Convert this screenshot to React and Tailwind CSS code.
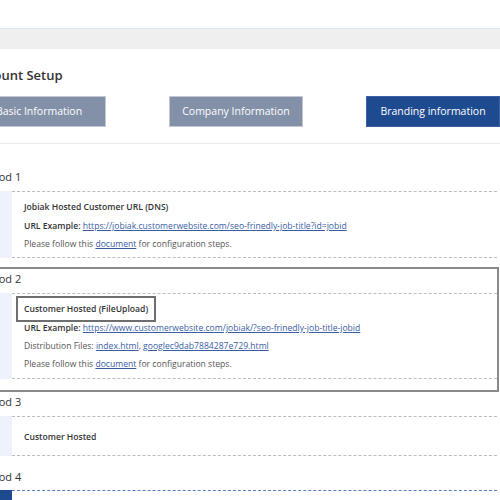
const Link = ({ children }) => (
  <span className="text-[#3a5da3] underline">{children}</span>
);

const Method = ({ label, selected, blue, className, labelGap, boxClass, children }) => (
  <section
    className={`ml-[-2px] w-[529px] border-2 pt-[3px] ${selected ? 'border-[#8a8a8a]' : 'border-transparent'} ${className}`}
  >
    <div className={`text-[11px] leading-[14px] text-[#333] ${labelGap}`}>{label}</div>
    <div className="flex">
      <div className={`w-[40px] shrink-0 ${blue ? 'bg-[#1e4a8f]' : 'bg-[#edf2fb]'}`} />
      <div
        className={`flex-1 border-y border-dashed pl-[4px] ${blue ? 'border-[#5d7fc0]' : 'border-[#bdbdbd]'} ${boxClass}`}
      >
        {children}
      </div>
    </div>
  </section>
);

const Title = ({ children, boxed }) => (
  <div
    className={`w-fit border-2 px-[6px] py-[5px] text-[8.6px] font-semibold leading-[12px] text-[#333] ${boxed ? 'border-[#6e6e6e]' : 'border-transparent'}`}
  >
    {children}
  </div>
);

const Line = ({ children, first }) => (
  <div className={`pl-[8px] text-[8.6px] leading-[12px] text-[#555] whitespace-nowrap ${first ? '' : 'mt-[6px]'}`}>
    {children}
  </div>
);

export default function App() {
  return (
    <div className="w-[500px] h-[500px] overflow-hidden bg-white font-['Open_Sans',sans-serif]">
      <div className="h-[28px]" />
      <div className="h-[21px] border-t border-[#dce5f2] bg-[#efefef]" />

      <div className="ml-[-28px] w-[530px]">
        <h1 className="mt-[17px] text-[13px] font-semibold leading-[18px] text-[#333]">Account Setup</h1>

        <div className="mt-[12px] flex gap-[63px]">
          <div className="flex h-[31px] w-[134px] items-center justify-center border border-[#c3c9d4] bg-[#8290a8] text-[10.5px] text-white">
            Basic Information
          </div>
          <div className="flex h-[31px] w-[134px] items-center justify-center border border-[#c3c9d4] bg-[#8290a8] text-[10.5px] text-white">
            Company Information
          </div>
          <div className="flex h-[31px] w-[134px] items-center justify-center border border-[#3d62a3] bg-[#1e4a8f] text-[10.5px] text-white">
            Branding information
          </div>
        </div>

        <div className="mt-[16px] border-t border-[#ebebeb]" />

        <Method label="Method 1" className="mt-[21px] pb-[7px]" labelGap="mb-[7px]" boxClass="pt-[2px] pb-[7px]">
          <Title>Jobiak Hosted Customer URL (DNS)</Title>
          <Line first>
            <span className="font-semibold text-[#333]">URL Example: </span>
            <Link>https://jobiak.customerwebsite.com/seo-frinedly-job-title?id=jobid</Link>
          </Line>
          <Line>
            Please follow this <Link>document</Link> for configuration steps.
          </Line>
        </Method>

        <Method label="Method 2" selected className="pb-[11px]" labelGap="mb-[7px]" boxClass="pt-[2px] pb-[8px]">
          <Title boxed>Customer Hosted (FileUpload)</Title>
          <Line first>
            <span className="font-semibold text-[#333]">URL Example: </span>
            <Link>https://www.customerwebsite.com/jobiak/?seo-frinedly-job-title-jobid</Link>
          </Line>
          <Line>
            Distribution Files: <Link>index.html</Link>, <Link>googlec9dab7884287e729.html</Link>
          </Line>
          <Line>
            Please follow this <Link>document</Link> for configuration steps.
          </Line>
        </Method>

        <Method label="Method 3" className="-mt-[2px] pb-[7px]" labelGap="mb-[7px]" boxClass="pt-[7px] pb-[5px]">
          <Title>Customer Hosted</Title>
        </Method>

        <Method label="Method 4" blue className="pb-[9px]" labelGap="mb-[6px]" boxClass="pt-[7px] pb-[5px]">
          <Title>Jobiak Hosted</Title>
        </Method>
      </div>
    </div>
  );
}
